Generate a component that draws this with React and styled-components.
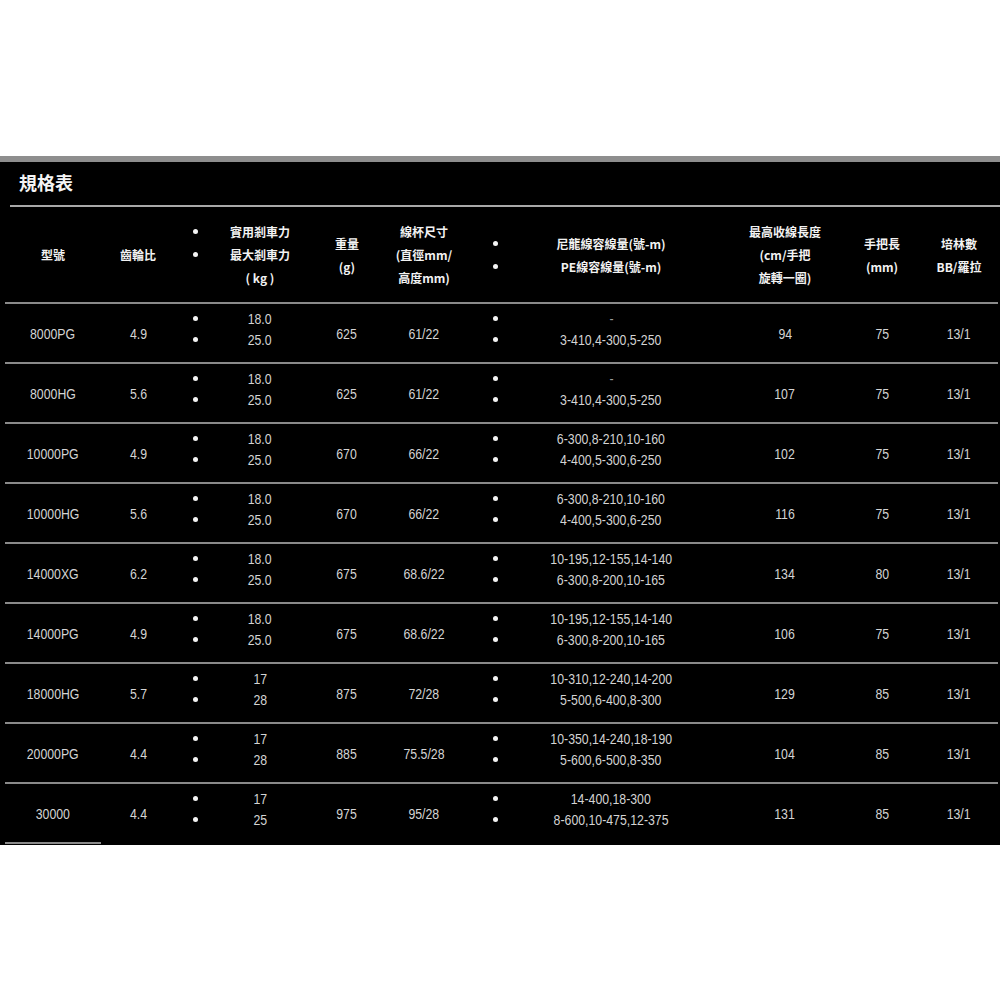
import React from 'react';
import styled, { createGlobalStyle } from 'styled-components';

const GlobalStyle = createGlobalStyle`
  body {
    margin: 0;
    background: #fff;
  }
`;

// centre and width of each column, taken from the picture
const COLS = [
  { c: 53, w: 96 },
  { c: 138, w: 60 },
  { c: 195, w: 20 },
  { c: 260, w: 84 },
  { c: 347, w: 70 },
  { c: 424, w: 72 },
  { c: 495, w: 20 },
  { c: 611, w: 170 },
  { c: 785, w: 110 },
  { c: 882, w: 64 },
  { c: 959, w: 70 },
];

const template = (() => {
  let pos = 0;
  const parts = [];
  COLS.forEach(({ c, w }) => {
    const start = c - w / 2;
    parts.push(`${start - pos}px`, `${w}px`);
    pos = start + w;
  });
  parts.push('1fr');
  return parts.join(' ');
})();

const rows = [
  ['8000PG', '4.9', ['18.0', '25.0'], '625', '61/22', ['-', '3-410,4-300,5-250'], '94', '75', '13/1'],
  ['8000HG', '5.6', ['18.0', '25.0'], '625', '61/22', ['-', '3-410,4-300,5-250'], '107', '75', '13/1'],
  ['10000PG', '4.9', ['18.0', '25.0'], '670', '66/22', ['6-300,8-210,10-160', '4-400,5-300,6-250'], '102', '75', '13/1'],
  ['10000HG', '5.6', ['18.0', '25.0'], '670', '66/22', ['6-300,8-210,10-160', '4-400,5-300,6-250'], '116', '75', '13/1'],
  ['14000XG', '6.2', ['18.0', '25.0'], '675', '68.6/22', ['10-195,12-155,14-140', '6-300,8-200,10-165'], '134', '80', '13/1'],
  ['14000PG', '4.9', ['18.0', '25.0'], '675', '68.6/22', ['10-195,12-155,14-140', '6-300,8-200,10-165'], '106', '75', '13/1'],
  ['18000HG', '5.7', ['17', '28'], '875', '72/28', ['10-310,12-240,14-200', '5-500,6-400,8-300'], '129', '85', '13/1'],
  ['20000PG', '4.4', ['17', '28'], '885', '75.5/28', ['10-350,14-240,18-190', '5-600,6-500,8-350'], '104', '85', '13/1'],
  ['30000', '4.4', ['17', '25'], '975', '95/28', ['14-400,18-300', '8-600,10-475,12-375'], '131', '85', '13/1'],
];

const Pair = ({ lines, dimFirst }) => (
  <Stack>
    <Txt $dim={dimFirst}>{lines[0]}</Txt>
    <Txt>{lines[1]}</Txt>
  </Stack>
);

const Bullets = ({ lift, up }) => (
  <Dots $lift={lift} $up={up}>
    <DotLine><Dot /></DotLine>
    <DotLine><Dot /></DotLine>
  </Dots>
);

const App = () => {
  return (
    <>
      <GlobalStyle />
      <Panel>
        <TitleBar>規格表</TitleBar>
        <TitleRule />
        <HeaderRow>
          <Cell $col={0}>型號</Cell>
          <Cell $col={1}>齒輪比</Cell>
          <Cell $col={2}>
            <Bullets lift />
          </Cell>
          <Cell $col={3}>
            <span>實用剎車力</span>
            <span>最大剎車力</span>
            <span>( kg )</span>
          </Cell>
          <Cell $col={4}>
            <span>重量</span>
            <span>(g)</span>
          </Cell>
          <Cell $col={5}>
            <span>線杯尺寸</span>
            <span>(直徑mm/</span>
            <span>高度mm)</span>
          </Cell>
          <Cell $col={6}>
            <Bullets />
          </Cell>
          <Cell $col={7}>
            <span>尼龍線容線量(號-m)</span>
            <span>PE線容線量(號-m)</span>
          </Cell>
          <Cell $col={8}>
            <span>最高收線長度</span>
            <span>(cm/手把</span>
            <span>旋轉一圈)</span>
          </Cell>
          <Cell $col={9}>
            <span>手把長</span>
            <span>(mm)</span>
          </Cell>
          <Cell $col={10}>
            <span>培林數</span>
            <span>BB/羅拉</span>
          </Cell>
        </HeaderRow>
        {rows.map((r) => (
          <React.Fragment key={r[0]}>
            <RowRule />
            <DataRow>
              <Cell $col={0}><Txt>{r[0]}</Txt></Cell>
              <Cell $col={1}><Txt>{r[1]}</Txt></Cell>
              <Cell $col={2}>
                <Bullets up />
              </Cell>
              <Cell $col={3}>
                <Pair lines={r[2]} />
              </Cell>
              <Cell $col={4}><Txt>{r[3]}</Txt></Cell>
              <Cell $col={5}><Txt>{r[4]}</Txt></Cell>
              <Cell $col={6}>
                <Bullets up />
              </Cell>
              <Cell $col={7}>
                <Pair lines={r[5]} dimFirst={r[5][0] === '-'} />
              </Cell>
              <Cell $col={8}><Txt>{r[6]}</Txt></Cell>
              <Cell $col={9}><Txt>{r[7]}</Txt></Cell>
              <Cell $col={10}><Txt>{r[8]}</Txt></Cell>
            </DataRow>
          </React.Fragment>
        ))}
        <ShortRule />
      </Panel>
    </>
  );
};

const Panel = styled.div`
  margin-top: 156px;
  background: #000;
  border-top: 6px solid #8e8e8e;
  padding-bottom: 1px;
`;

const TitleBar = styled.div`
  height: 43px;
  display: flex;
  align-items: center;
  padding: 0 0 3px 19px;
  box-sizing: border-box;
  color: #f4f4f4;
  font-family: 'Noto Sans CJK TC', sans-serif;
  font-weight: 700;
  font-size: 18px;
`;

const TitleRule = styled.div`
  height: 2px;
  margin-left: 10px;
  background: #a8a8a8;
`;

const RowRule = styled.div`
  height: 2px;
  margin: 0 2px 0 5px;
  background: #8a8a8a;
`;

const ShortRule = styled.div`
  height: 2px;
  width: 96px;
  margin-left: 5px;
  background: #8a8a8a;
`;

const Grid = styled.div`
  display: grid;
  grid-template-columns: ${template};
  align-items: center;
`;

const HeaderRow = styled(Grid)`
  height: 95px;
  color: #f2f2f2;
  font-family: 'Noto Sans CJK TC', sans-serif;
  font-weight: 700;
  font-size: 12px;
  line-height: 23px;
`;

const DataRow = styled(Grid)`
  height: 58px;
  color: #d4d4d4;
  font-family: 'Liberation Sans', Arial, sans-serif;
  font-size: 15px;
  line-height: 21px;
`;

const Cell = styled.div`
  grid-column: ${(p) => p.$col * 2 + 2};
  grid-row: 1;
  display: flex;
  flex-direction: column;
  align-items: center;
  justify-content: center;
  white-space: nowrap;
`;

// the figures in the picture are drawn in a tall, narrow face
const Txt = styled.span`
  display: inline-block;
  transform: scaleX(0.82);
  color: ${(p) => (p.$dim ? '#9a9a9a' : 'inherit')};
`;

const Stack = styled.div`
  display: flex;
  flex-direction: column;
  align-items: center;
  padding-bottom: 8px;
`;

const Dots = styled.div`
  display: flex;
  flex-direction: column;
  padding-bottom: ${(p) => (p.$lift ? '23px' : p.$up ? '8px' : '0')};
`;

const DotLine = styled.div`
  display: flex;
  align-items: center;
  justify-content: center;
  height: 1lh;
`;

const Dot = styled.span`
  width: 5px;
  height: 5px;
  border-radius: 50%;
  background: #f4f4f4;
`;

export default App;
